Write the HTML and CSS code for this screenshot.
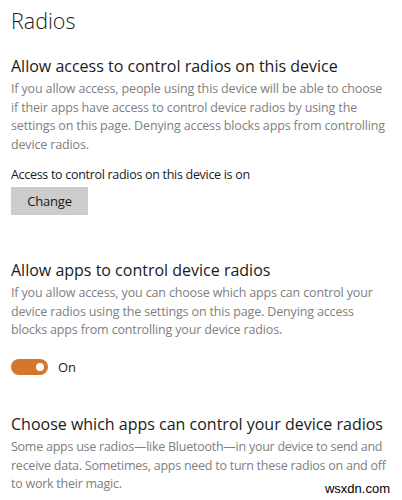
FILE: index.html
```html
<!DOCTYPE html>
<html>
<head>
    <title>Radios</title>
    <link rel="stylesheet" href="styles.css">
</head>
<body>
    <h1 class="page-title">Radios</h1>

    <!-- Acceso al dispositivo -->
    <div class="section">
        <h2 class="section-title">Allow access to control radios on this device</h2>
        <p class="desc">If you allow access, people using this device will be able to choose if their apps have access to control device radios by using the settings on this page. Denying access blocks apps from controlling device radios.</p>
        <p class="status">Access to control radios on this device is on</p>
        <button class="btn">Change</button>
    </div>

    <!-- Apps -->
    <div class="section section-apps">
        <h2 class="section-title">Allow apps to control device radios</h2>
        <p class="desc">If you allow access, you can choose which apps can control your device radios using the settings on this page. Denying access blocks apps from controlling your device radios.</p>
        <div class="toggle-row">
            <span class="toggle"><span class="knob"></span></span>
            <span class="toggle-label">On</span>
        </div>
    </div>

    <!-- Lista de apps -->
    <div class="section section-list">
        <h2 class="section-title">Choose which apps can control your device radios</h2>
        <p class="desc desc-tight">Some apps use radios&mdash;like Bluetooth&mdash;in your device to send and receive data. Sometimes, apps need to turn these radios on and off to work their magic.</p>
    </div>

    <div class="watermark">wsxdn.com</div>
</body>
</html>
```

FILE: styles.css
```css
:root {
    --text: #1a1a1a;
    --muted: #808080;
    --btn-bg: #cccccc;
    --accent: #d5772b;
}

body {
    font-family: 'Open Sans', sans-serif;
    margin: 0;
    padding: 0 11px;
    background: #fff;
    color: var(--text);
    overflow: hidden;
    height: 500px;
    position: relative;
}

.page-title {
    font-size: 21.5px;
    font-weight: 300;
    margin: 0;
    padding-top: 7px;
    line-height: 28px;
}

.section-title {
    font-size: 16px;
    font-weight: 400;
    margin: 0;
    line-height: 22px;
}

.section {
    padding-top: 20px;
}

.desc {
    color: var(--muted);
    font-size: 12.5px;
    letter-spacing: -0.15px;
    line-height: 18.7px;
    margin: 3px 0 0;
}

.desc-tight {
    letter-spacing: -0.25px;
}

.status {
    font-size: 12.5px;
    letter-spacing: -0.3px;
    margin: 11px 0 0;
    line-height: 18px;
}

.btn {
    display: block;
    margin-top: 3px;
    width: 77px;
    height: 28px;
    border: 0;
    background: var(--btn-bg);
    font-family: inherit;
    font-size: 13px;
    letter-spacing: -0.2px;
    color: var(--text);
    padding: 0;
}

.section-apps {
    padding-top: 44px;
}

.toggle-row {
    display: flex;
    align-items: center;
    gap: 10px;
    margin-top: 18px;
}

.toggle {
    width: 37px;
    height: 16px;
    border-radius: 8px;
    background: var(--accent);
    display: flex;
    align-items: center;
    justify-content: flex-end;
    padding-right: 4px;
    box-sizing: border-box;
}

.knob {
    width: 8px;
    height: 8px;
    border-radius: 50%;
    background: #fff;
}

.toggle-label {
    font-size: 13px;
}

.section-list {
    padding-top: 37px;
}

.watermark {
    position: absolute;
    right: 12px;
    bottom: 4px;
    font-family: 'Liberation Sans', Arial, sans-serif;
    font-size: 13px;
    color: #000;
    background: #fff;
}
```
